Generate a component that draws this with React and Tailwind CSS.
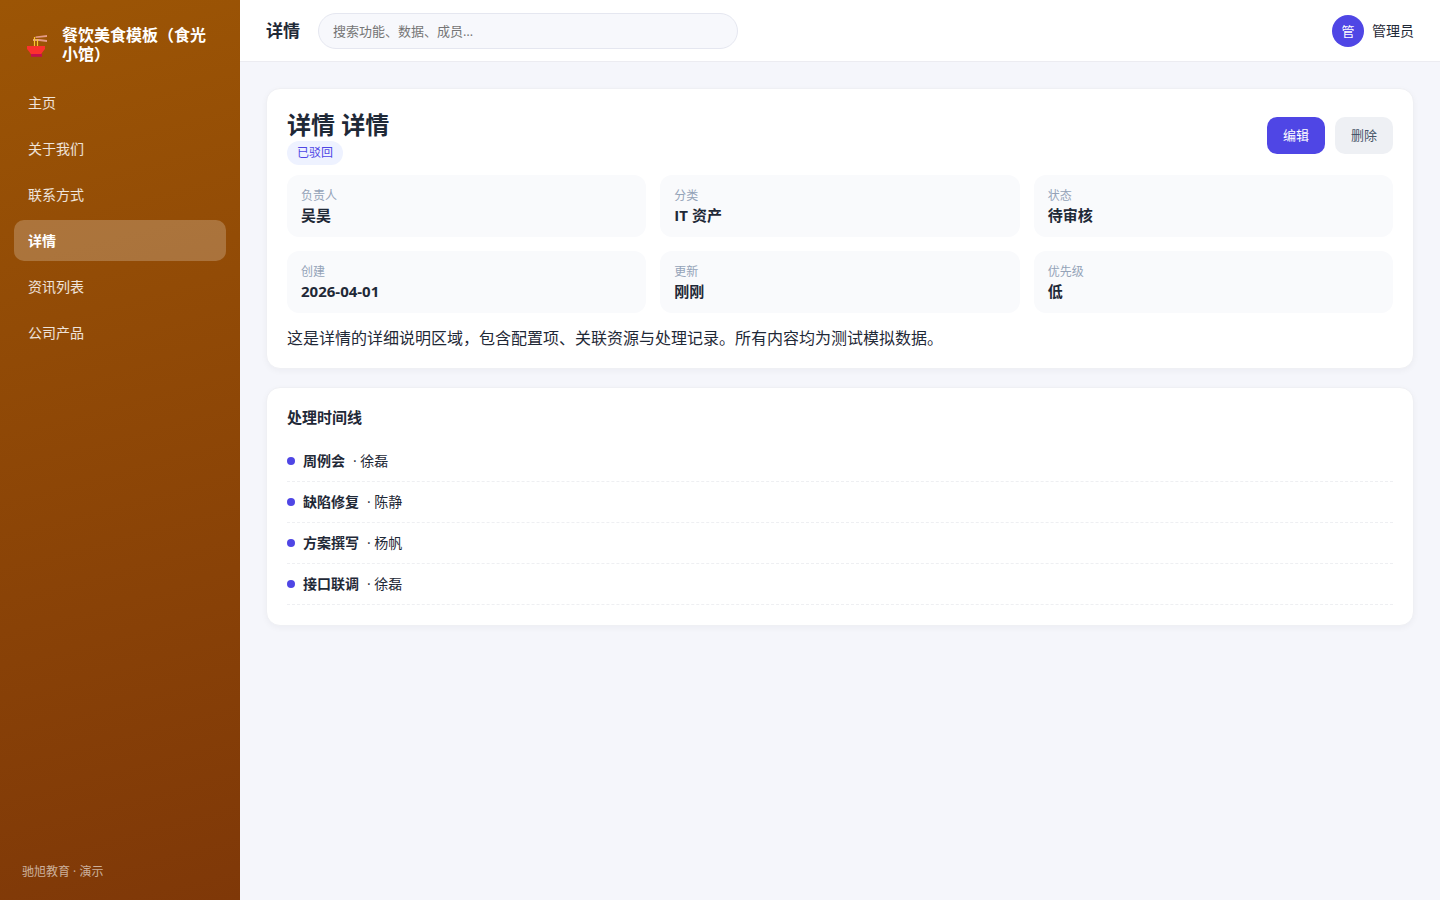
const navItems = ['主页', '关于我们', '联系方式', '详情', '资讯列表', '公司产品'];

const fields = [
  ['负责人', '吴昊'],
  ['分类', 'IT 资产'],
  ['状态', '待审核'],
  ['创建', '2026-04-01'],
  ['更新', '刚刚'],
  ['优先级', '低'],
];

const timeline = [
  ['周例会', '徐磊'],
  ['缺陷修复', '陈静'],
  ['方案撰写', '杨帆'],
  ['接口联调', '徐磊'],
];

function NoodleBowl() {
  return (
    <svg className="h-[30px] w-[30px] shrink-0" viewBox="0 0 30 30" aria-hidden="true">
      <path d="M13.500 6.500 25 5v2l-11.500 1zM11 8.900l6 .1 8 1v2l-8-1-6-.1z" fill="#e59a86" />
      <path d="M12.500 7v10M15.500 9v7.500" stroke="#fcc62e" strokeWidth="1.200" fill="none" />
      <path d="M5 16h18v3l-2 2.500-2 2.700H9L7 21.500 5 19z" fill="#fb312e" />
      <path d="M9 24h11v2.800H9z" fill="#c50f4b" />
    </svg>
  );
}

function Sidebar() {
  return (
    <aside className="flex w-60 shrink-0 flex-col bg-[linear-gradient(165deg,#9c5505_0%,#7f3808_100%)] px-3.5 pt-[26px] pb-[19px] text-white">
      <div className="mb-[18px] flex items-center gap-2.5 px-2">
        <NoodleBowl />
        <div className="text-base leading-[19px] font-bold">餐饮美食模板（食光小馆）</div>
      </div>
      <nav className="flex flex-col gap-[5px]">
        {navItems.map((item) => (
          <a
            key={item}
            href="#"
            aria-current={item === '详情' ? 'page' : undefined}
            className={
              item === '详情'
                ? 'rounded-[10px] bg-white/22 px-3.5 py-2.5 text-sm leading-[21px] font-bold text-white'
                : 'rounded-[10px] px-3.5 py-2.5 text-sm leading-[21px] text-white/85'
            }
          >
            {item}
          </a>
        ))}
      </nav>
      <div className="mt-auto px-2 text-xs leading-[18px] text-white/60">驰旭教育 · 演示</div>
    </aside>
  );
}

function Header() {
  return (
    <header className="flex items-center gap-[18px] border-b border-[#ececf1] bg-white px-[26px] pt-[13px] pb-3">
      <div className="text-[17px] leading-6 font-bold">详情</div>
      <input
        type="search"
        aria-label="搜索"
        placeholder="搜索功能、数据、成员…"
        className="h-9 w-[420px] rounded-full border border-[#e5e7f0] bg-[#f7f8fc] px-3.5 text-[13px] outline-none placeholder:text-[#757575]"
      />
      <div className="ml-auto flex items-center gap-2 text-sm">
        <span className="flex size-8 items-center justify-center rounded-full bg-[#4f46e5] text-[13px] text-white">管</span>
        <span>管理员</span>
      </div>
    </header>
  );
}

const cardClass =
  'rounded-[14px] border border-[#eff0f4] bg-white p-5 shadow-[0_2px_6px_rgba(15,23,42,0.04)]';

export default function App() {
  return (
    <div className="flex min-h-screen bg-[#f5f6fb] font-['Open_Sans','Noto_Sans_CJK_SC',sans-serif] text-[#1f2937]">
      <Sidebar />
      <div className="flex min-w-0 flex-1 flex-col">
        <Header />
        <main className="flex flex-col gap-[18px] p-[26px]">
          <section className={cardClass}>
            <div className="mb-2.5 flex items-start justify-between">
              <div className="flex flex-col items-start">
                <h1 className="text-2xl leading-8 font-bold">详情 详情</h1>
                <span className="rounded-full bg-[#eef2ff] px-2.5 py-[3px] text-xs leading-[18px] text-[#4f46e5]">已驳回</span>
              </div>
              <div className="flex gap-2.5 pt-2">
                <button type="button" className="rounded-[10px] bg-[#4f46e5] px-4 py-2 text-[13px] leading-[21px] text-white">编辑</button>
                <button type="button" className="rounded-[10px] bg-[#eef0f4] px-4 py-2 text-[13px] leading-[21px] text-[#475569]">删除</button>
              </div>
            </div>
            <dl className="grid grid-cols-3 gap-3.5">
              {fields.map(([label, value]) => (
                <div key={label} className="rounded-xl bg-[#f9fafc] px-3.5 py-3">
                  <dt className="text-xs leading-[18px] text-[#94a3b8]">{label}</dt>
                  <dd className="text-[15px] leading-5 font-bold">{value}</dd>
                </div>
              ))}
            </dl>
            <p className="mt-[15px] text-base leading-5">
              这是详情的详细说明区域，包含配置项、关联资源与处理记录。所有内容均为测试模拟数据。
            </p>
          </section>
          <section className={cardClass}>
            <h2 className="mb-[15px] text-[15px] leading-[18px] font-bold">处理时间线</h2>
            <ul>
              {timeline.map(([task, person]) => (
                <li key={task} className="flex items-center gap-2 border-b border-dashed border-[#eeeff2] py-2.5 text-sm leading-5">
                  <span className="size-2 rounded-full bg-[#4f46e5]" />
                  <b>{task}</b>
                  <span>· {person}</span>
                </li>
              ))}
            </ul>
          </section>
        </main>
      </div>
    </div>
  );
}
